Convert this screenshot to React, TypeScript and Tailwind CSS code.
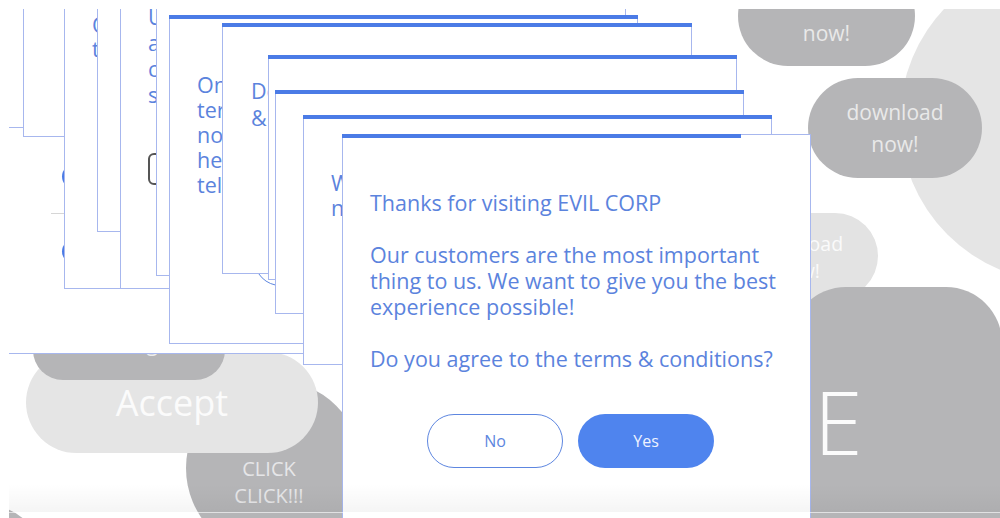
import React from "react";

type WinProps = {
  className: string;
  bar?: string;
  children?: React.ReactNode;
};

// A consent dialog window: thin periwinkle frame with a progress bar on top.
function Win({ className, bar, children }: WinProps) {
  return (
    <div className={`absolute flex flex-col border border-[#a7b7ee] bg-white ${className}`}>
      {bar && <div className={`-ml-px -mt-px h-[4px] shrink-0 bg-[#4b7be6] ${bar}`} />}
      {children}
    </div>
  );
}

function Lines({ lines, className = "" }: { lines: string[]; className?: string }) {
  return (
    <div className={`flex flex-col whitespace-nowrap text-[21.5px] text-[#5b83dd] ${className}`}>
      {lines.map((l, i) => (
        <span key={i}>{l}</span>
      ))}
    </div>
  );
}

export default function App() {
  return (
    <div className="relative h-[518px] w-[1000px] overflow-hidden bg-white font-['Open_Sans',sans-serif]">
      <div className="absolute bottom-0 left-[9px] right-0 top-[9px] overflow-hidden">
        <div className="absolute -left-[9px] -top-[9px] h-[518px] w-[1000px]">
          {/* background call-to-action blobs */}
          <div className="absolute left-[900px] top-[-42px] h-[324px] w-[324px] rounded-full bg-[#e5e5e5]" />

          <div className="absolute left-[738px] top-[-34px] flex h-[100px] w-[177px] flex-col items-center justify-end rounded-full bg-[#b5b5b7] pb-[17px] text-[21px] leading-[32px] text-[#e9e9e9]">
            <span className="mb-[10px]">download</span>
            <span>now!</span>
          </div>

          <div className="absolute left-[808px] top-[78px] flex h-[100px] w-[174px] flex-col items-center justify-center rounded-full bg-[#b5b5b7] text-[21px] leading-[32px] text-[#e9e9e9]">
            <span>download</span>
            <span>now!</span>
          </div>

          <div className="absolute left-[718px] top-[213px] flex h-[86px] w-[160px] flex-col items-center justify-center rounded-full bg-[#e3e3e3] pt-[1px] text-[19.5px] leading-[27px] text-[#fafafa]">
            <span>download</span>
            <span>now!</span>
          </div>

          <div className="absolute left-[790px] top-[287px] flex h-[260px] w-[212px] rounded-t-[56px] bg-[#b5b5b7] pl-[24px] pt-[90px]">
            <span className="text-[88px] font-light leading-none text-[#fbfbfb]">E</span>
          </div>

          <div className="absolute left-[186px] top-[380px] flex h-[176px] w-[176px] flex-col items-center justify-center rounded-full bg-[#b5b5b7] pr-[10px] pt-[27px] text-[20px] leading-[27px] text-[#e6e6e8]">
            <span>CLICK</span>
            <span>CLICK!!!</span>
          </div>

          <div className="absolute left-[26px] top-[352px] flex h-[101px] w-[292px] items-center justify-center rounded-full bg-[#e5e5e5] text-[36px] text-[#fbfbfb]">
            Accept
          </div>

          <div className="absolute left-[33px] top-[290px] flex h-[90px] w-[192px] items-end justify-center rounded-[30px] bg-[#b5b5b7] pb-[22px] text-[21px] leading-[30px] text-[#ececec]">
            Settings
          </div>

          <div className="absolute left-[-150px] top-[506px] h-[100px] w-[190px] rounded-full bg-[#b5b5b7]" />

          {/* stack of dialogs, oldest first */}
          <Win className="left-[-160px] top-[-30px] h-[384px] w-[469px]">
            <div className="flex w-[160px] flex-col pl-[210px] pt-[193px]">
              <div className="ml-[11px] h-[25px] w-[130px] shrink-0 rounded-full bg-[#4b7be6]" />
              <div className="mt-[24px] h-px w-[140px] shrink-0 bg-[#d6d6d6]" />
              <div className="ml-[11px] mt-[25px] h-[25px] w-[130px] shrink-0 rounded-full bg-[#4b7be6]" />
            </div>
          </Win>

          <Win className="left-[-300px] top-[-30px] h-[158px] w-[469px]" />
          <Win className="left-[23px] top-[-30px] h-[167px] w-[469px]" />

          <Win className="left-[64px] top-[-30px] h-[319px] w-[469px]">
            <Lines className="pl-[27px] pt-[42px] leading-[24px]" lines={["Our partners use", "tracking tools to"]} />
          </Win>

          <Win className="left-[97px] top-[-30px] h-[262px] w-[469px]" />

          <Win className="left-[120px] top-[-30px] h-[319px] w-[469px]">
            <Lines
              className="pl-[27px] pt-[33px] leading-[26px]"
              lines={["Unfortunately, we", "are unable to", "continue without", "some cookies."]}
            />
            <div className="ml-[27px] mt-[45px] h-[32px] w-[130px] rounded-[6px] border-2 border-[#555555]" />
          </Win>

          <Win className="left-[156px] top-[-30px] h-[306px] w-[470px]" />

          <Win className="left-[169px] top-[15px] h-[329px] w-[469px]" bar="w-[469px]">
            <Lines
              className="pl-[27px] pt-[53px] leading-[25px]"
              lines={["Once you accept our", "terms, you will", "no longer be able to", "help us", "tell you more"]}
            />
            <div className="ml-[84px] mt-[36px] h-[53px] w-[136px] rounded-full border-[1.5px] border-[#5d86e0]" />
          </Win>

          <Win className="left-[222px] top-[23px] h-[251px] w-[470px]" bar="w-[470px]">
            <Lines className="pl-[28px] pt-[50px] leading-[27px]" lines={["Do you agree to the terms", "& conditions?"]} />
          </Win>

          <Win className="left-[268px] top-[55px] h-[225px] w-[469px]" bar="w-[469px]" />
          <Win className="left-[275px] top-[90px] h-[224px] w-[469px]" bar="w-[469px]" />

          <Win className="left-[303px] top-[115px] h-[250px] w-[469px]" bar="w-[469px]">
            <Lines className="pl-[27px] pt-[51px] leading-[25px]" lines={["Wait! We have great", "news for you!"]} />
          </Win>

          <Win className="left-[342px] top-[134px] h-[400px] w-[469px]" bar="w-[399px]">
            <div className="flex flex-col whitespace-nowrap pl-[27px] pt-[52px] text-[21.5px] leading-[26px] text-[#5b83dd]">
              <p>Thanks for visiting EVIL CORP</p>
              <p className="mt-[26px]">
                Our customers are the most important
                <br />
                thing to us. We want to give you the best
                <br />
                experience possible!
              </p>
              <p className="mt-[26px]">Do you agree to the terms &amp; conditions?</p>
            </div>
            <div className="mt-[42px] flex gap-[15px] pl-[84px]">
              <button className="flex h-[54px] w-[136px] items-center justify-center rounded-full border-[1.5px] border-[#5d86e0] bg-white text-[16px] text-[#5d86e0]">
                No
              </button>
              <button className="flex h-[54px] w-[136px] items-center justify-center rounded-full bg-[#4f84ee] text-[16px] text-[#eef3ff]">
                Yes
              </button>
            </div>
          </Win>

          {/* soft shading along the lower edge */}
          <div className="absolute left-0 right-0 top-[484px] h-[28px] bg-linear-to-b from-transparent to-black/[0.04]" />
          <div className="absolute left-0 right-0 top-[512px] h-px bg-white/60" />
        </div>
      </div>
    </div>
  );
}
